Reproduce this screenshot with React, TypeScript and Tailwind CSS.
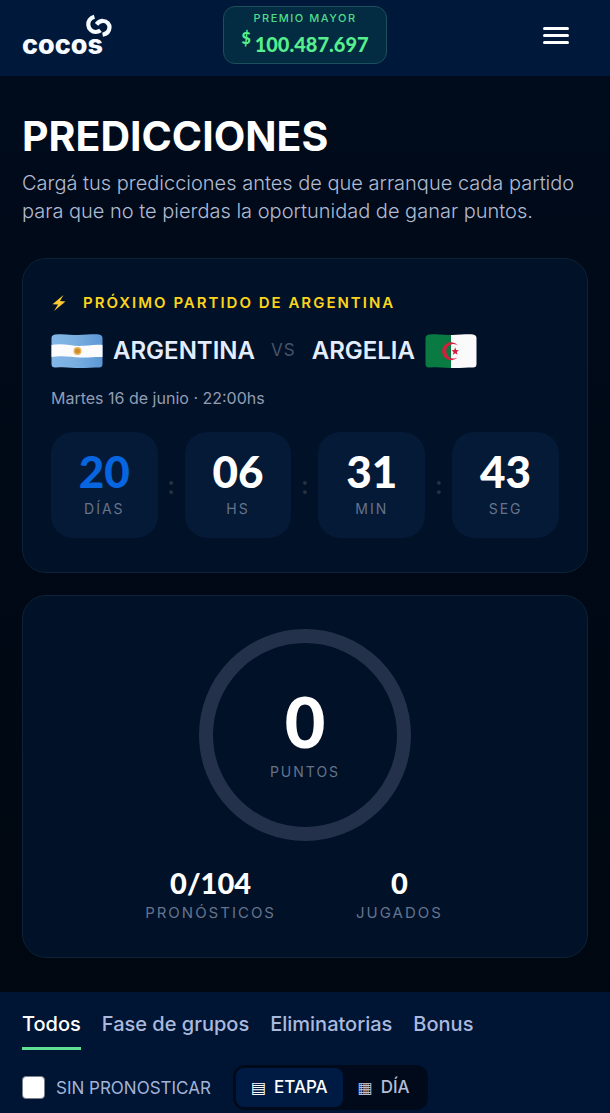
import { useState } from 'react';

const countdown = [
  { value: '20', label: 'DÍAS', highlight: true },
  { value: '06', label: 'HS' },
  { value: '31', label: 'MIN' },
  { value: '43', label: 'SEG' },
];

const stats = [
  { value: '0/104', label: 'PRONÓSTICOS' },
  { value: '0', label: 'JUGADOS' },
];

const tabs = ['Todos', 'Fase de grupos', 'Eliminatorias', 'Bonus'];

const views = [
  { id: 'etapa', icon: '▤', label: 'ETAPA' },
  { id: 'dia', icon: '▦', label: 'DÍA' },
];

// Waving flag outline, shared by both teams
const flagShape =
  'M4 1.5C14 .5 19 2 27 2S42 1 48 1.5Q51.5 2 51.5 5V31Q51.5 34.5 48 34.5C42 34.5 37 35 29 35S14 33.5 5 34.5Q.5 35 .5 31V5Q.5 2 4 1.5Z';

function Logo() {
  return (
    <a href="#" aria-label="cocos" className="flex w-[90px] flex-col">
      <svg viewBox="0 0 28 24" className="-mb-0.5 h-6 w-7 self-end" fill="none" stroke="#f5fbff" strokeWidth="4.2">
        <path d="M10.4 3.8C6 5 4 8.5 4.3 12C4.7 16 8 19 11.5 19C13.5 19 15 18.6 16.5 17.4" />
        <path d="M12.5 11.4C14.5 9 17 7.8 19.3 8C23 8 25.7 11.5 25.5 14.5C25.2 18.5 22.5 21 18.6 21.7" />
      </svg>
      <span className="text-[27px] leading-5 font-extrabold text-[#f5fbff]">cocos</span>
    </a>
  );
}

function Header() {
  return (
    <header className="grid h-[76px] grid-cols-[1fr_auto_1fr] items-start bg-[#001839] px-[22px] pt-1.5">
      <div className="pt-[7px]">
        <Logo />
      </div>
      <div className="flex h-[58px] w-[164px] flex-col items-center rounded-xl border border-[#1d4f5c] bg-[#032b41] pt-[3px]">
        <span className="text-[11px] leading-4 font-medium tracking-[1.5px] text-[#4fdc8c]">PREMIO MAYOR</span>
        <span className="flex items-start font-[Lato] font-black text-[#57ee8d]">
          <span className="pt-0.5 text-base leading-5">$</span>
          <span className="ml-1 pt-1.5 text-xl leading-6 tabular-nums">100.487.697</span>
        </span>
      </div>
      <button type="button" aria-label="Abrir menú" className="mr-[19px] flex flex-col gap-1 justify-self-end pt-[21px]">
        <span className="h-[3px] w-[26px] rounded-xs bg-white" />
        <span className="h-[3px] w-[26px] rounded-xs bg-white" />
        <span className="h-[3px] w-[26px] rounded-xs bg-white" />
      </button>
    </header>
  );
}

function ArgentinaFlag() {
  return (
    <svg viewBox="0 0 52 36" className="h-9 w-[52px]" role="img" aria-label="Bandera de Argentina">
      <defs>
        <clipPath id="ar">
          <path d={flagShape} />
        </clipPath>
        <linearGradient id="sky" x1="0" x2="1">
          <stop offset="0" stopColor="#82b7e8" />
          <stop offset=".45" stopColor="#7aafe0" />
          <stop offset="1" stopColor="#5c97d6" />
        </linearGradient>
      </defs>
      <g clipPath="url(#ar)">
        <rect width="52" height="36" fill="url(#sky)" />
        <path d="M0 12C12 10 20 13 28 13S44 11 52 12V24C44 23.5 38 25 29 24.5S12 22 0 24Z" fill="#fcfcfe" />
      </g>
      <circle cx="26.5" cy="18" r="4" fill="#e6b35c" />
      <circle cx="26.5" cy="18" r="2.5" fill="#cf8b2e" />
    </svg>
  );
}

function AlgeriaFlag() {
  return (
    <svg viewBox="0 0 52 36" className="h-9 w-[52px]" role="img" aria-label="Bandera de Argelia">
      <defs>
        <clipPath id="dz">
          <path d={flagShape} />
        </clipPath>
      </defs>
      <g clipPath="url(#dz)">
        <rect width="26" height="36" fill="#0a7a43" />
        <rect x="26" width="26" height="36" fill="#fafafa" />
      </g>
      <path d="M33 12.5A9 9 0 1 0 33 24A7.3 7.3 0 1 1 33 12.5Z" fill="#d21f3c" />
      <path d="M30.2 14.5L31.2 17L33.9 17.3L31.8 19L32.5 21.7L30.2 20.2L27.9 21.7L28.6 19L26.5 17.3L29.2 17Z" fill="#d21f3c" />
    </svg>
  );
}

function NextMatch() {
  return (
    <section className="rounded-3xl border border-[#0c2237] bg-[#001128] px-7 pt-8 pb-[34px]">
      <p className="flex items-center gap-4 text-[15px] leading-6 font-semibold tracking-[2px] text-[#fbd51c]">
        <svg viewBox="0 0 16 18" className="h-[18px] w-4" fill="#fdc832">
          <path d="M12.5 1L1.5 10.2L7 10.6L3 17L14.5 7.4L9 7Z" />
        </svg>
        PRÓXIMO PARTIDO DE ARGENTINA
      </p>

      <div className="mt-[18px] flex items-center text-[#e4edfb]">
        <ArgentinaFlag />
        <span className="ml-2.5 text-[24px] leading-9 font-semibold">ARGENTINA</span>
        <span className="mx-4 text-[17px] tracking-[1px] text-[#465369]">VS</span>
        <span className="mr-2.5 text-[24px] leading-9 font-semibold">ARGELIA</span>
        <AlgeriaFlag />
      </div>

      <p className="mt-[17px] text-base leading-6 text-[#929db3]">Martes 16 de junio · 22:00hs</p>

      <div className="mt-[22px] flex items-center">
        {countdown.map(({ value, label, highlight }, i) => (
          <div key={label} className={`flex items-center ${i > 0 ? 'flex-[133]' : 'flex-[106]'}`}>
            {i > 0 && (
              <span className="w-[27px] shrink-0 text-center font-[Lato] text-2xl font-bold text-[#273345]">:</span>
            )}
            <div className="flex h-[106px] flex-1 flex-col items-center rounded-[22px] bg-[#051a36] pt-[15px]">
              <span
                className={`font-[Lato] text-[44px] leading-12 font-black tabular-nums ${
                  highlight ? 'text-[#0765e0]' : 'text-white'
                }`}
              >
                {value}
              </span>
              <span className="mt-1 text-sm leading-5 tracking-[2px] text-[#66738c]">{label}</span>
            </div>
          </div>
        ))}
      </div>
    </section>
  );
}

function Score() {
  return (
    <section className="flex flex-col items-center rounded-3xl border border-[#0c2237] bg-[#001128] pt-[33px] pb-8">
      <div className="flex size-[212px] flex-col items-center rounded-full border-[14px] border-[#23324a] pt-[39px]">
        <span className="font-[Lato] text-[70px] leading-[78px] font-black text-white">0</span>
        <span className="text-sm leading-6 tracking-[2px] text-[#66738c]">PUNTOS</span>
      </div>
      <div className="mt-6 flex gap-20 pr-[22px]">
        {stats.map(({ value, label }) => (
          <div key={label} className="flex flex-col items-center">
            <span className="font-[Lato] text-[29px] leading-9 font-black text-white">{value}</span>
            <span className="text-[15px] leading-6 tracking-[2px] text-[#66738c]">{label}</span>
          </div>
        ))}
      </div>
    </section>
  );
}

function Filters() {
  const [tab, setTab] = useState('Todos');
  const [view, setView] = useState('etapa');
  const [pending, setPending] = useState(false);

  return (
    <div className="flex-1 bg-[#001533] px-[22px] pt-[18px]">
      <nav className="flex gap-[21px]">
        {tabs.map((name) => (
          <button
            key={name}
            type="button"
            onClick={() => setTab(name)}
            className={`border-b-3 pb-[9px] text-xl leading-7 font-medium ${
              tab === name ? 'border-[#5fe093] text-white' : 'border-transparent text-[#aab9de]'
            }`}
          >
            {name}
          </button>
        ))}
      </nav>

      <div className="mt-[15px] flex items-center gap-[22px]">
        <label className="flex items-center gap-[11px] text-[17px] leading-6 text-[#a3b3d8]">
          <input
            type="checkbox"
            checked={pending}
            onChange={(e) => setPending(e.target.checked)}
            className="size-[23px] appearance-none rounded-sm border border-[#7b7f88] bg-white checked:bg-[#0765e0]"
          />
          SIN PRONOSTICAR
        </label>
        <div className="flex rounded-xl bg-[#000a1a] p-[3px]">
          {views.map(({ id, icon, label }) => (
            <button
              key={id}
              type="button"
              onClick={() => setView(id)}
              className={`flex h-[39px] items-center gap-2 rounded-lg px-[15px] text-[17px] font-medium ${
                view === id ? 'bg-[#001b43] text-white' : 'text-[#b4bed6]'
              }`}
            >
              <span className="font-['DejaVu_Sans'] text-base leading-6">{icon}</span>
              {label}
            </button>
          ))}
        </div>
      </div>
    </div>
  );
}

export default function App() {
  return (
    <div className="flex min-h-screen flex-col bg-linear-to-b from-[#000b1c] to-[#00070f] font-[Inter,sans-serif]">
      <Header />
      <main className="flex flex-1 flex-col">
        <div className="px-[22px] pt-[33px] pb-[34px]">
          <h1 className="text-[41px] leading-[54px] font-bold text-white">PREDICCIONES</h1>
          <p className="mt-1.5 text-xl leading-7 font-light text-[#b1bbd2]">
            Cargá tus predicciones antes de que arranque cada partido para que no te pierdas la oportunidad de ganar
            puntos.
          </p>
          <div className="mt-[33px] flex flex-col gap-[22px]">
            <NextMatch />
            <Score />
          </div>
        </div>
        <Filters />
      </main>
    </div>
  );
}
